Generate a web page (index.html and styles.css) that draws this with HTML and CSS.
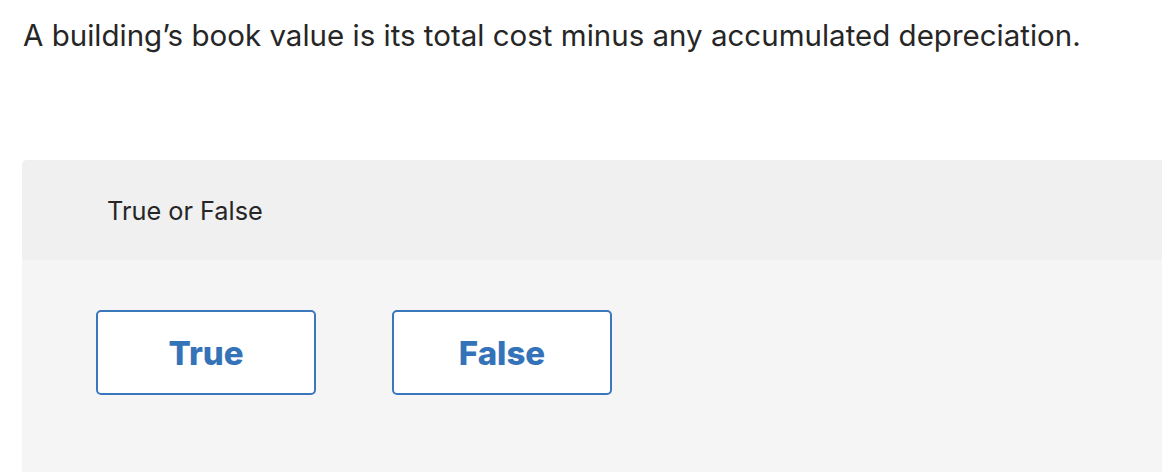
FILE: index.html
```html
<!DOCTYPE html>
<html lang="en">
<head>
<meta charset="utf-8">
<title>True or False</title>
<link rel="stylesheet" href="styles.css">
</head>
<body>
<main class="page">
  <p class="prompt">A building’s book value is its total cost minus any accumulated depreciation.</p>
  <section class="panel">
    <header class="panel-head">True or False</header>
    <div class="panel-body">
      <button class="choice" type="button">True</button>
      <button class="choice" type="button">False</button>
    </div>
  </section>
</main>
</body>
</html>
```
FILE: styles.css
```css
html, body {
  margin: 0;
  padding: 0;
  background: #ffffff;
}
body {
  font-family: "Inter", "Liberation Sans", sans-serif;
  color: #222222;
  overflow: hidden;
}
.page {
  padding-top: 15px;
}
.prompt {
  margin: 0 0 0 23px;
  font-size: 29.5px;
  line-height: 40px;
  color: #262626;
}
.panel {
  margin: 105px 0 0 22px;
  border-top-left-radius: 5px;
  overflow: hidden;
  background: #f5f5f5;
}
.panel-head {
  background: #f0f0f0;
  height: 100px;
  display: flex;
  align-items: center;
  padding-left: 85px;
  font-size: 25.3px;
  color: #262626;
}
.panel-body {
  display: flex;
  gap: 76px;
  padding: 50px 0 0 74px;
  height: 162px;
}
.choice {
  width: 220px;
  height: 85px;
  box-sizing: border-box;
  border: 2px solid #3a77bd;
  border-radius: 5px;
  background: #ffffff;
  color: #3573b9;
  font-family: "Inter", "Liberation Sans", sans-serif;
  font-weight: 800;
  font-size: 33px;
  padding: 0;
}
```
